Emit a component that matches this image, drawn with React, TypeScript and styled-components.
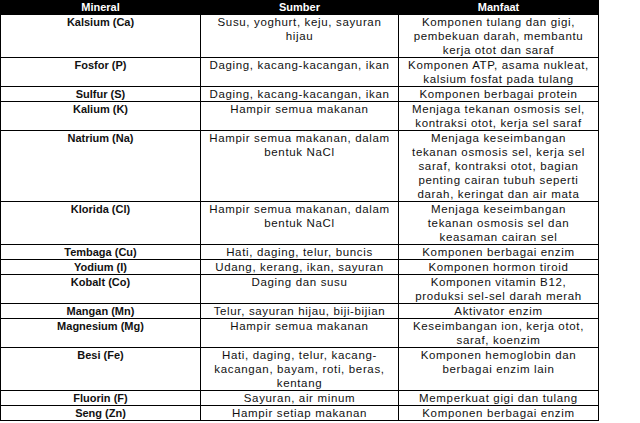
import styled, { createGlobalStyle } from "styled-components";

const GlobalStyle = createGlobalStyle`
  body {
    margin: 0;
    background: #ffffff;
    font-family: "Liberation Sans", Arial, sans-serif;
  }
`;

const Table = styled.table`
  border-collapse: collapse;
  width: 599px;
  table-layout: fixed;
  font-size: 11px;
  color: #111;
`;

const HeadCell = styled.th`
  background: #000;
  color: #fff;
  font-weight: bold;
  height: 13px;
  line-height: 13px;
  padding: 0;
  border: 1px solid #000;
`;

const Cell = styled.td<{ $bold?: boolean }>`
  border: 1px solid #000;
  padding: 0 2px;
  vertical-align: top;
  text-align: center;
  line-height: 14px;
  white-space: nowrap;
  font-weight: ${(p) => (p.$bold ? "bold" : "normal")};
  font-size: ${(p) => (p.$bold ? "11px" : "11.5px")};
  letter-spacing: ${(p) => (p.$bold ? "0" : "0.65px")};
`;

interface Row {
  mineral: string;
  sumber: string[];
  manfaat: string[];
}

const rows: Row[] = [
  {
    mineral: "Kalsium (Ca)",
    sumber: ["Susu, yoghurt, keju, sayuran", "hijau"],
    manfaat: ["Komponen tulang dan gigi,", "pembekuan darah, membantu", "kerja otot dan saraf"],
  },
  {
    mineral: "Fosfor (P)",
    sumber: ["Daging, kacang-kacangan, ikan"],
    manfaat: ["Komponen ATP, asama nukleat,", "kalsium fosfat pada tulang"],
  },
  {
    mineral: "Sulfur (S)",
    sumber: ["Daging, kacang-kacangan, ikan"],
    manfaat: ["Komponen berbagai protein"],
  },
  {
    mineral: "Kalium (K)",
    sumber: ["Hampir semua makanan"],
    manfaat: ["Menjaga tekanan osmosis sel,", "kontraksi otot, kerja sel saraf"],
  },
  {
    mineral: "Natrium (Na)",
    sumber: ["Hampir semua makanan, dalam", "bentuk NaCl"],
    manfaat: [
      "Menjaga keseimbangan",
      "tekanan osmosis sel, kerja sel",
      "saraf, kontraksi otot, bagian",
      "penting cairan tubuh seperti",
      "darah, keringat dan air mata",
    ],
  },
  {
    mineral: "Klorida (Cl)",
    sumber: ["Hampir semua makanan, dalam", "bentuk NaCl"],
    manfaat: ["Menjaga keseimbangan", "tekanan osmosis sel dan", "keasaman cairan sel"],
  },
  {
    mineral: "Tembaga (Cu)",
    sumber: ["Hati, daging, telur, buncis"],
    manfaat: ["Komponen berbagai enzim"],
  },
  {
    mineral: "Yodium (I)",
    sumber: ["Udang, kerang, ikan, sayuran"],
    manfaat: ["Komponen hormon tiroid"],
  },
  {
    mineral: "Kobalt (Co)",
    sumber: ["Daging dan susu"],
    manfaat: ["Komponen vitamin B12,", "produksi sel-sel darah merah"],
  },
  {
    mineral: "Mangan (Mn)",
    sumber: ["Telur, sayuran hijau, biji-bijian"],
    manfaat: ["Aktivator enzim"],
  },
  {
    mineral: "Magnesium (Mg)",
    sumber: ["Hampir semua makanan"],
    manfaat: ["Keseimbangan ion, kerja otot,", "saraf, koenzim"],
  },
  {
    mineral: "Besi (Fe)",
    sumber: ["Hati, daging, telur, kacang-", "kacangan, bayam, roti, beras,", "kentang"],
    manfaat: ["Komponen hemoglobin dan", "berbagai enzim lain"],
  },
  {
    mineral: "Fluorin (F)",
    sumber: ["Sayuran, air minum"],
    manfaat: ["Memperkuat gigi dan tulang"],
  },
  {
    mineral: "Seng (Zn)",
    sumber: ["Hampir setiap makanan"],
    manfaat: ["Komponen berbagai enzim"],
  },
];

const Lines = ({ items }: { items: string[] }) => (
  <>
    {items.map((t, i) => (
      <div key={i}>{t}</div>
    ))}
  </>
);

const App = () => {
  return (
    <>
      <GlobalStyle />
      <Table>
        <colgroup>
          <col style={{ width: 200 }} />
          <col style={{ width: 198 }} />
          <col style={{ width: 200 }} />
        </colgroup>
        <thead>
          <tr>
            <HeadCell>Mineral</HeadCell>
            <HeadCell>Sumber</HeadCell>
            <HeadCell>Manfaat</HeadCell>
          </tr>
        </thead>
        <tbody>
          {rows.map((r) => (
            <tr key={r.mineral}>
              <Cell $bold>{r.mineral}</Cell>
              <Cell>
                <Lines items={r.sumber} />
              </Cell>
              <Cell>
                <Lines items={r.manfaat} />
              </Cell>
            </tr>
          ))}
        </tbody>
      </Table>
    </>
  );
};

export default App;
